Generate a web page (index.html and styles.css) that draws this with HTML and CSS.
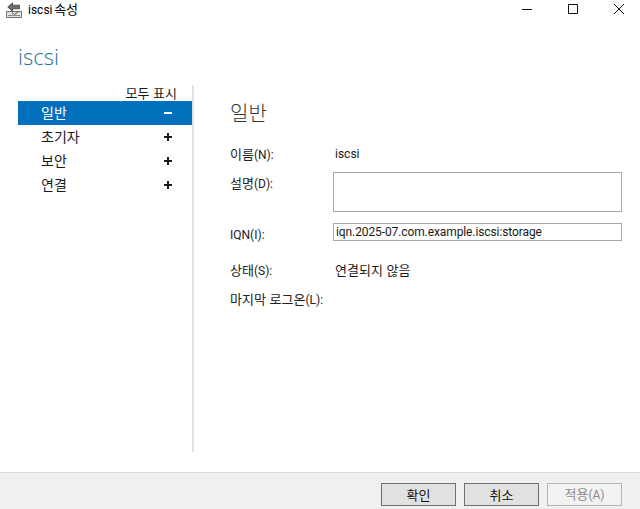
FILE: index.html
```html
<!DOCTYPE html>
<html lang="ko">
<head>
<meta charset="utf-8">
<title>iscsi 속성</title>
<link rel="stylesheet" href="styles.css">
</head>
<body>
<div class="window">
  <header class="titlebar">
    <svg class="app-icon" width="16" height="16" viewBox="0 0 16 16">
      <path d="M.5 9.500h15v6h-15z" fill="#e4e4e4" stroke="#707070"/>
      <path d="M2 13.500h12" stroke="#8a8a8a"/>
      <path d="M6.500 .8 1.800 5 6.500 9.200V6.800h7V3.200h-7z" fill="#6e6e6e" stroke="#3c3c3c" stroke-width=".8"/>
      <path d="M6 10.500l2.500 2 3.500-2.500" fill="none" stroke="#555"/>
    </svg>
    <span class="title-text"><span class="lat">iscsi</span> 속성</span>
    <div class="controls">
      <svg class="ctl" width="46" height="18" viewBox="0 0 46 18"><path d="M22 8.500h10" stroke="#111"/></svg>
      <svg class="ctl" width="46" height="18" viewBox="0 0 46 18"><path d="M22.500 3.500h9v9h-9z" fill="none" stroke="#111"/></svg>
      <svg class="ctl" width="46" height="18" viewBox="0 0 46 18"><path d="M22 3l10 10M32 3 22 13" stroke="#111" fill="none"/></svg>
    </div>
  </header>
  <h1 class="page-title">iscsi</h1>
  <main class="content">
    <nav class="sidebar">
      <div class="show-all">모두 표시</div>
      <div class="nav-item selected"><span>일반</span><span class="sign minus"></span></div>
      <div class="nav-item"><span>초기자</span><span class="sign plus"></span></div>
      <div class="nav-item"><span>보안</span><span class="sign plus"></span></div>
      <div class="nav-item"><span>연결</span><span class="sign plus"></span></div>
    </nav>
    <section class="panel">
      <h2 class="section-title">일반</h2>
      <div class="row row-name"><label>이름<span class="lat">(N):</span></label><span class="value lat">iscsi</span></div>
      <div class="row row-desc"><label>설명<span class="lat">(D):</span></label><div class="textbox tall"></div></div>
      <div class="row row-iqn"><label><span class="lat">IQN(I):</span></label><div class="textbox lat">iqn.2025-07.com.example.iscsi:storage</div></div>
      <div class="row row-state"><label>상태<span class="lat">(S):</span></label><span class="value">연결되지 않음</span></div>
      <div class="row row-login"><label>마지막 로그온<span class="lat">(L):</span></label></div>
    </section>
  </main>
  <footer class="footer">
    <button class="btn">확인</button>
    <button class="btn">취소</button>
    <button class="btn disabled">적용<span class="lat">(A)</span></button>
  </footer>
</div>
</body>
</html>
```
FILE: styles.css
```css
* { box-sizing: border-box; }
html, body { margin: 0; padding: 0; }
body {
  width: 640px;
  height: 509px;
  overflow: hidden;
  background: #fff;
  color: #1a1a1a;
  font: 13px/16px "Noto Sans CJK KR", sans-serif;
}
.lat { font-family: Roboto, sans-serif; font-size: 12px; }
.window { display: flex; flex-direction: column; height: 509px; }
.titlebar { display: flex; align-items: center; height: 18px; margin-top: 1px; padding-left: 6px; flex: none; }
.app-icon { flex: none; margin-right: 6px; }
.title-text { color: #000; margin-bottom: 2px; word-spacing: -2px; }
.controls { margin-left: auto; display: flex; margin-right: 2px; }
.ctl { display: block; }
.page-title {
  margin: 22px 0 0 18px;
  height: 30px;
  font: 300 22px/30px "Open Sans", sans-serif;
  color: #1f6f98;
}
.content { display: flex; flex: 1; padding-top: 14px; min-height: 0; }
.sidebar {
  width: 176px;
  margin-left: 18px;
  height: 367px;
  border-right: 2px solid #e2e2e2;
  flex: none;
}
.show-all { height: 16px; text-align: right; padding-right: 15px; line-height: 16px; }
.nav-item {
  height: 24px;
  display: flex;
  align-items: center;
  justify-content: space-between;
  padding: 0 20px 2px 23px;
  font-size: 14px;
}
.nav-item .sign { margin-top: 2px; }
.nav-item.selected { background: #0070bd; color: #fff; }
.sign { position: relative; width: 8px; height: 8px; display: block; }
.sign::before { content: ""; position: absolute; left: 0; top: 3px; width: 8px; height: 2px; background: currentColor; }
.plus::after { content: ""; position: absolute; left: 3px; top: 0; width: 2px; height: 8px; background: currentColor; }
.panel { flex: 1; padding: 16px 18px 0 36px; }
.section-title { margin: 0 0 20px; font: 300 20px/24px "Noto Sans CJK KR", sans-serif; color: #333; }
.row { display: flex; align-items: flex-start; }
.row label { width: 103px; flex: none; color: #222; }
.value { padding-left: 2px; }
.row-name { height: 27px; padding-top: 1px; }
.row-desc { height: 51px; }
.row-desc label { padding-top: 3px; }
.row-iqn { height: 38px; }
.row-iqn label { padding-top: 3px; }
.row-state { height: 30px; padding-top: 1px; }
.textbox { flex: 1; height: 18px; border: 1px solid #a8a8a8; padding-left: 2px; line-height: 16px; white-space: nowrap; overflow: hidden; letter-spacing: -0.1px; }
.textbox.tall { height: 40px; }
.footer {
  height: 37px;
  flex: none;
  background: #f0f0f0;
  border-top: 1px solid #d9d9d9;
  display: flex;
  justify-content: flex-end;
  gap: 8px;
  padding: 10px 18px 0 0;
}
.btn {
  width: 75px;
  height: 23px;
  border: 1px solid #707070;
  background: #e1e1e1;
  color: #111;
  font: 13px/16px "Noto Sans CJK KR", sans-serif;
  padding: 0;
}
.btn.disabled { background: #f2f2f2; border-color: #b5b5b5; color: #8a8a8a; }
```
